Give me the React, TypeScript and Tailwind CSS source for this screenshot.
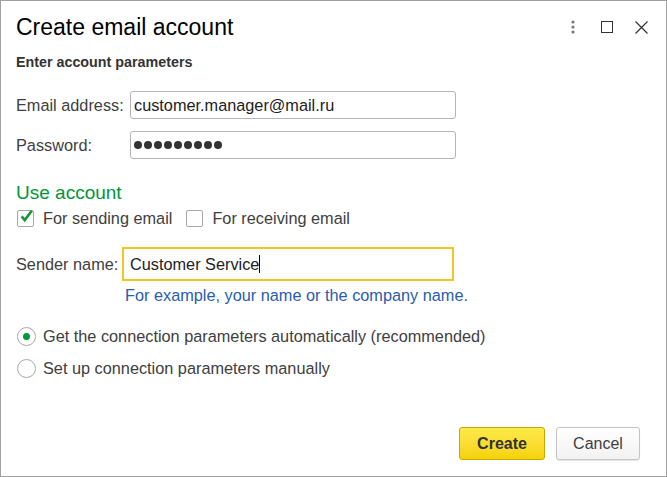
export default function App() {
  const dots = Array.from({ length: 9 })

  return (
    <div className="w-[667px] h-[477px] bg-white border border-[#a0a0a0] flex flex-col text-[#404040] font-['Liberation_Sans',Arial,sans-serif] text-[16.3px] leading-[24px] overflow-hidden">
      {/* Header */}
      <div className="flex items-center justify-between pl-[15px] pr-[18px] pt-[12px] h-[40px]">
        <h1 className="text-[23px] leading-none text-black">Create email account</h1>
        <div className="flex items-center gap-[22px]">
          <svg width="4" height="14" viewBox="0 0 4 14" className="mr-[4px]">
            <circle cx="2" cy="2" r="1.6" fill="#777" />
            <circle cx="2" cy="7" r="1.6" fill="#777" />
            <circle cx="2" cy="12" r="1.6" fill="#777" />
          </svg>
          <svg width="12" height="12" viewBox="0 0 12 12">
            <rect x="0.5" y="0.5" width="11" height="11" fill="none" stroke="#333" strokeWidth="1" />
          </svg>
          <svg width="13" height="13" viewBox="0 0 13 13">
            <path d="M0.5 0.5 L12.5 12.5 M12.5 0.5 L0.5 12.5" stroke="#333" strokeWidth="1.2" />
          </svg>
        </div>
      </div>

      <div className="pl-[15px] pt-[12px] text-[14.3px] leading-[18px] font-bold text-[#333]">Enter account parameters</div>

      {/* Credentials */}
      <div className="flex flex-col gap-[12px] pl-[15px] mt-[20px]">
        <div className="flex items-center">
          <label className="w-[114px]">Email address:</label>
          <div className="w-[326px] h-[28px] border border-[#b5b5b5] rounded-[3px] flex items-center px-[3px] text-[#222]">
            customer.manager@mail.ru
          </div>
        </div>
        <div className="flex items-center">
          <label className="w-[114px]">Password:</label>
          <div className="w-[326px] h-[28px] border border-[#b5b5b5] rounded-[3px] flex items-center gap-[2px] px-[3px]">
            {dots.map((_, i) => (
              <span key={i} className="w-[8px] h-[8px] rounded-full bg-[#333]" />
            ))}
          </div>
        </div>
      </div>

      {/* Use account */}
      <div className="pl-[15px] mt-[25px] text-[19px] leading-[18px] text-[#00963c]">Use account</div>
      <div className="flex items-center pl-[16px] mt-[4px]">
        <span className="w-[17px] h-[17px] border border-[#a8a8a8] rounded-[2px] flex items-center justify-center">
          <svg width="16" height="16" viewBox="0 0 16 16" className="-mt-[5px] ml-[2px]">
            <path d="M2 8.5 L5.8 13 L14.5 1.5" fill="none" stroke="#18973a" strokeWidth="3.2" />
          </svg>
        </span>
        <span className="ml-[9px]">For sending email</span>
        <span className="w-[17px] h-[17px] border border-[#a8a8a8] rounded-[2px] ml-[14px]" />
        <span className="ml-[9px]">For receiving email</span>
      </div>

      {/* Sender */}
      <div className="flex items-center pl-[15px] mt-[17px]">
        <label className="w-[106px]">Sender name:</label>
        <div className="w-[332px] h-[34px] border-2 border-[#f2c523] flex items-center px-[6px] text-[#222]">
          Customer Service<span className="w-px h-[18px] bg-black" />
        </div>
      </div>
      <div className="pl-[124px] mt-[2px] text-[#2a5caa]">For example, your name or the company name.</div>

      {/* Radios */}
      <div className="flex flex-col gap-[8px] pl-[16px] mt-[17px]">
        <div className="flex items-center">
          <span className="w-[19px] h-[19px] rounded-full border border-[#a8a8a8] flex items-center justify-center">
            <span className="w-[7px] h-[7px] rounded-full bg-[#00963c]" />
          </span>
          <span className="ml-[7px]">Get the connection parameters automatically (recommended)</span>
        </div>
        <div className="flex items-center">
          <span className="w-[19px] h-[19px] rounded-full border border-[#a8a8a8]" />
          <span className="ml-[7px]">Set up connection parameters manually</span>
        </div>
      </div>

      {/* Buttons */}
      <div className="mt-auto flex justify-end gap-[11px] pr-[26px] pb-[16px]">
        <button className="w-[86px] h-[33px] rounded-[3px] border border-[#c9a800] bg-gradient-to-b from-[#ffe94a] to-[#f5d200] font-bold text-[#333] text-[16px]">
          Create
        </button>
        <button className="w-[84px] h-[33px] rounded-[3px] border border-[#c4c4c4] bg-gradient-to-b from-white to-[#f2f2f2] text-[#404040] text-[16px] shadow-[0_1px_1px_rgba(0,0,0,0.1)]">
          Cancel
        </button>
      </div>
    </div>
  )
}
